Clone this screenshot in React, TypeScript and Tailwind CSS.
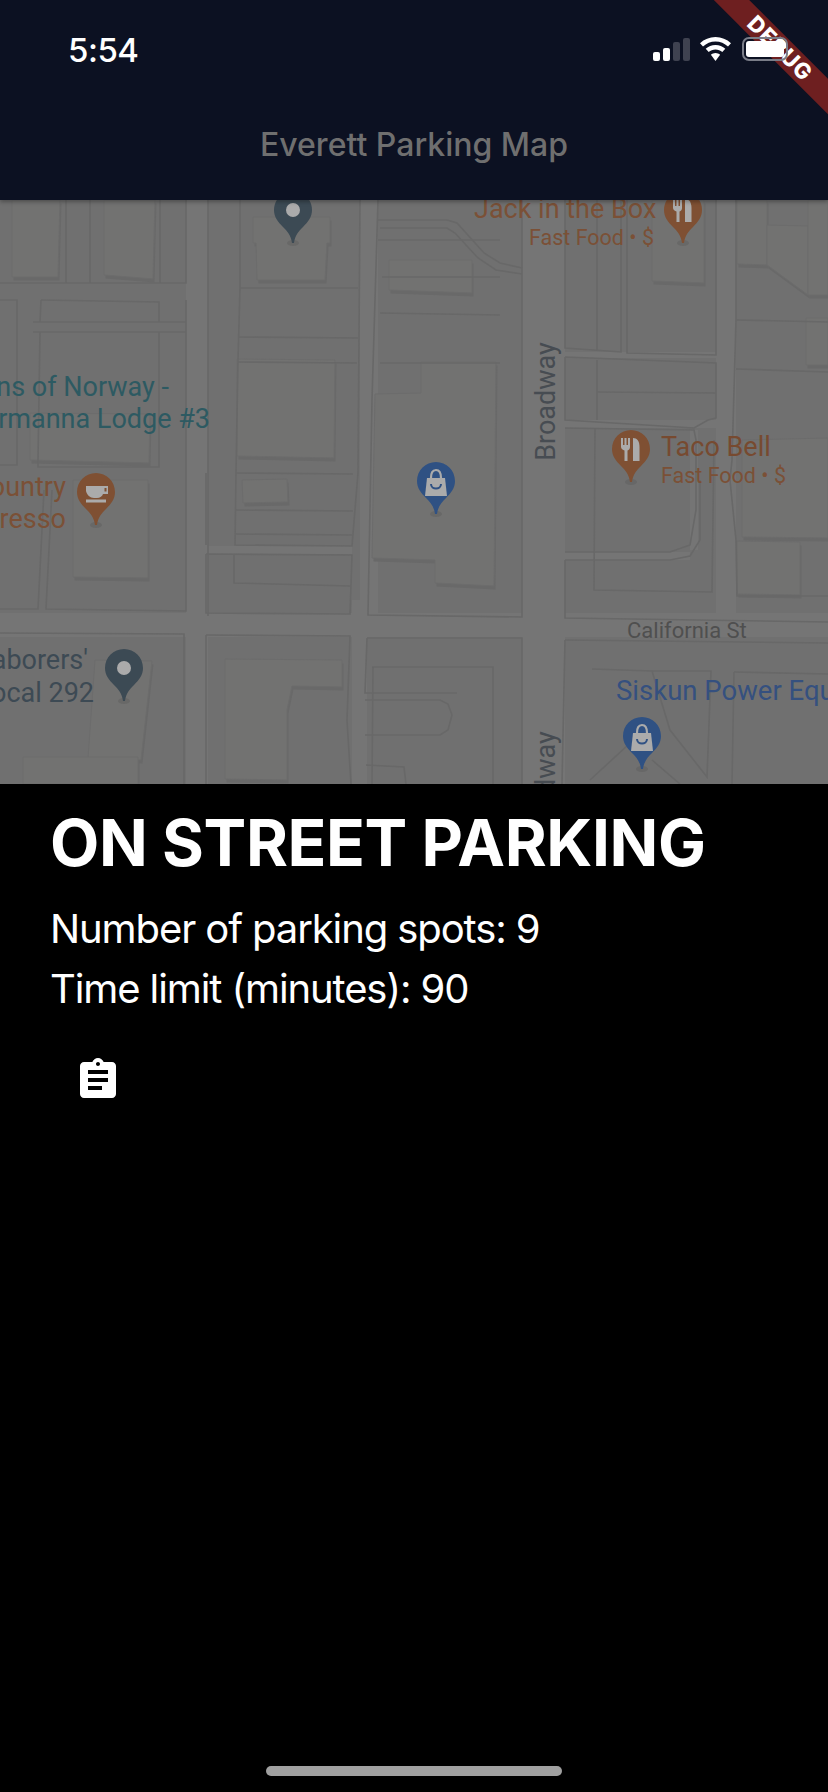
import { MdAssignment } from "react-icons/md";

const blockLines = [
  // left column
  "0,283 186,283 186,200",
  "66,200 66,283",
  "90,200 90,283",
  "160,200 160,283",
  "0,300 17,300 17,465 0,465",
  "41,300 159,302 159,322",
  "41,300 40,322",
  "33,322 186,322",
  "33,332 186,332",
  "40,332 38,460 38,467 159,467 159,332",
  "186,300 186,611 46,609 52,490 ",
  "0,609 38,609 44,490",
  "208,200 208,616",
  "0,633 184,634 184,784",
  "206,635 350,636 347,720 351,784",
  "206,635 206,784",
  // middle column
  "240,200 240,288 238,360 236,473 235,545 352,546 358,473 360,200",
  "240,288 358,288",
  "238,337 358,338",
  "238,362 357,363",
  "236,473 353,474",
  "235,510 353,511",
  "235,534 352,535",
  "206,554 352,555 350,614 206,613 206,554",
  "234,555 234,583 350,586",
  "206,473 206,545",
  // right-middle column
  "378,200 372,400 368,615 522,617 522,200",
  "378,220 447,220 457,223 484,253 500,263 522,268",
  "380,228 447,228 455,233 478,258 496,270 522,274",
  "378,240 500,240",
  "382,277 500,277",
  "380,313 500,315",
  "380,363 500,363",
  "367,638 522,638 522,784",
  "367,638 365,693 457,693",
  "365,700 440,700 448,704 452,715 448,730 440,735 365,735",
  "372,667 493,667 493,784",
  "366,765 404,767 406,784",
  "373,667 372,784",
  // right of Broadway
  "565,200 565,348 621,352 621,200",
  "597,200 597,350",
  "627,200 627,353 716,355 716,200",
  "565,357 716,363 716,418 708,420 694,428 565,420 565,357",
  "597,360 597,420",
  "597,392 716,393",
  "565,428 694,430 696,440 696,510 690,545 670,552 565,552",
  "565,560 670,560 690,556 700,540 700,480",
  "565,560 565,618 828,622",
  "565,640 828,643",
  "595,428 594,590 712,592 714,440",
  "736,200 736,320 732,460 730,480 736,540 737,596 828,596",
  "736,320 828,322",
  "736,369 828,372",
  "565,640 562,784",
  "592,669 652,671 670,730 707,777 711,671 652,671",
  "734,672 732,784",
  "734,672 828,674",
  "590,780 628,745 638,745",
  "652,760 680,784",
];

const buildings = [
  "12,200 60,200 58,277 12,277",
  "104,200 155,200 153,279 104,275",
  "253,217 330,217 330,243 327,243 325,280 257,280 256,243 253,243",
  "237,359 335,360 334,458 237,456",
  "242,480 287,479 288,502 243,503",
  "30,413 150,414 149,463 30,460",
  "73,480 148,480 148,578 73,577",
  "95,660 152,661 141,760 88,758",
  "23,757 138,757 138,784 23,784",
  "225,659 342,660 342,687 292,686 287,710 287,780 225,779",
  "389,260 472,260 472,293 389,290",
  "421,362 496,362 494,586 435,583 435,560 372,558 375,394 421,393",
  "652,200 704,200 704,283 652,281",
  "737,200 767,200 767,265 737,264",
  "767,225 808,226 808,295 767,265",
  "808,200 828,200 828,295 808,295",
  "742,440 828,438 828,538 742,537",
  "737,541 800,542 800,595 737,594",
  "806,318 828,318 828,365 806,365",
];

function MapBackground() {
  return (
    <svg className="absolute inset-0 h-full w-full" viewBox="0 200 828 584" fill="none">
      <rect x="0" y="200" width="828" height="584" fill="#707070" />
      {/* roads */}
      <g fill="#757575">
        <rect x="186" y="200" width="22" height="584" />
        <rect x="360" y="200" width="18" height="430" />
        <rect x="352" y="600" width="15" height="184" />
        <rect x="522" y="200" width="43" height="584" />
        <rect x="716" y="200" width="20" height="420" />
        <rect x="0" y="613" width="828" height="24" />
        <rect x="208" y="546" width="144" height="8" />
        <rect x="565" y="352" width="151" height="6" />
        <rect x="565" y="420" width="171" height="8" />
        <rect x="565" y="552" width="125" height="8" />
        <rect x="690" y="430" width="8" height="120" />
      </g>
      {buildings.map((points) => (
        <polygon key={`s${points}`} points={points} fill="#696969" transform="translate(1.5,3.5)" />
      ))}
      {buildings.map((points) => (
        <polygon key={points} points={points} fill="#727271" stroke="#6c6c6c" strokeWidth="1" />
      ))}
      {blockLines.map((points) => (
        <polyline key={points} points={points} stroke="#686868" strokeWidth="1.6" />
      ))}
    </svg>
  );
}

const pinShape =
  "M19 0C29.5 0 38 8.5 38 19C38 26 34 31 29 36C25 40 21 44 20 52H18C17 44 13 40 9 36C4 31 0 26 0 19C0 8.5 8.5 0 19 0Z";

function Pin({ color, kind, className }: { color: string; kind: "dot" | "food" | "cup" | "bag"; className: string }) {
  const glyph = "#ababab";
  return (
    <svg className={`absolute h-[56px] w-[38px] ${className}`} viewBox="0 0 38 56">
      <ellipse cx="19" cy="52" rx="6" ry="3" fill="#555555" opacity="0.35" />
      <path d={pinShape} fill={color} />
      {kind === "dot" && <circle cx="19" cy="19" r="7" fill={glyph} />}
      {kind === "food" && (
        <g fill={glyph}>
          <path d="M9 8h2v7h1.500V8h2v7H16V8h2v9c0 2-1 3-2.500 3.400V31h-3V20.400C11 20 9 19 9 17Z" />
          <path d="M21 31V8c4 0 6.500 3 6.500 9v14Z" />
        </g>
      )}
      {kind === "cup" && (
        <g fill={glyph}>
          <path d="M9 13h22v8h-5c-.5 2-3 4-6 4h-3c-4 0-7-3-8-7Z" />
          <rect x="27.500" y="15" width="2" height="3.500" fill={color} />
          <rect x="9" y="26.500" width="20" height="3" />
        </g>
      )}
      {kind === "bag" && (
        <g>
          <path d="M14 16c0-5 1.500-8 5-8s5 3 5 8" fill="none" stroke={glyph} strokeWidth="2.200" />
          <path d="M10 16h18l2 18H8Z" fill={glyph} />
          <path d="M14 22c0 6 10 6 10 0" fill="none" stroke={color} strokeWidth="2" />
        </g>
      )}
    </svg>
  );
}

const labels = [
  { text: "Jack in the Box", cls: "left-[474px] top-[-4px] text-[27px] text-[#7b5036]" },
  { text: "Fast Food • $", cls: "left-[529px] top-[27px] text-[21.500px] text-[#7b5036]" },
  { text: "Sons of Norway -", cls: "right-[659px] top-[174px] text-[27px] text-[#2d5a62]" },
  { text: "Normanna Lodge #3", cls: "right-[618px] top-[206px] text-[27px] text-[#2d5a62]" },
  { text: "Country", cls: "right-[762px] top-[274px] text-[27px] text-[#7b5036]" },
  { text: "Espresso", cls: "right-[762px] top-[306px] text-[27px] text-[#7b5036]" },
  { text: "Taco Bell", cls: "left-[661px] top-[234px] text-[27px] text-[#774a30]" },
  { text: "Fast Food • $", cls: "left-[661px] top-[265px] text-[21.500px] text-[#7b5036]" },
  { text: "California St", cls: "left-[627px] top-[420px] text-[22px] text-[#4f4f4f]" },
  { text: "Laborers'", cls: "right-[740px] top-[447px] text-[27px] text-[#3d4a54]" },
  { text: "Local 292", cls: "right-[734px] top-[480px] text-[27px] text-[#3d4a54]" },
  { text: "Siskun Power Equipment", cls: "left-[616px] top-[477px] text-[27.500px] text-[#35507f]" },
  { text: "Broadway", cls: "left-[487px] top-[188px] -rotate-90 text-[27px] text-[#474c52]" },
  { text: "Broadway", cls: "left-[487px] top-[577px] -rotate-90 text-[27px] text-[#474c52]" },
];

function StatusIcons() {
  return (
    <div className="mt-[8px] flex h-[24px] items-end">
      <div className="flex items-end gap-[3px]">
        <div className="h-[9px] w-[7px] rounded-[2px] bg-white" />
        <div className="h-[13px] w-[7px] rounded-[2px] bg-white" />
        <div className="h-[19px] w-[7px] rounded-[2px] bg-[#3f4250]" />
        <div className="h-[23px] w-[7px] rounded-[2px] bg-[#3f4250]" />
      </div>
      <svg className="ml-[10px] h-[24px] w-[31px]" viewBox="0 0 31 24" fill="white">
        <path d="M15.500 0C9.500 0 4.200 2.300 0 6.200L3 9.500C6.400 6.400 10.700 4.500 15.500 4.500S24.600 6.400 28 9.500L31 6.200C26.800 2.300 21.500 0 15.500 0Z" />
        <path d="M15.500 8C11.700 8 8.300 9.400 5.700 11.800L8.700 15C10.500 13.400 12.900 12.400 15.500 12.400S20.500 13.400 22.300 15L25.300 11.800C22.700 9.400 19.300 8 15.500 8Z" />
        <path d="M15.500 16C13.700 16 12.100 16.700 10.900 17.800L15.500 24L20.100 17.800C18.900 16.700 17.300 16 15.500 16Z" />
      </svg>
      <div className="ml-[11px] flex h-[24px] w-[46px] items-center rounded-[7px] border-2 border-[#7a7d88] p-[2px]">
        <div className="h-full w-[38px] rounded-[3px] bg-white" />
      </div>
    </div>
  );
}

export default function App() {
  return (
    <div className="relative flex h-[1792px] w-[828px] flex-col overflow-hidden bg-black font-['Inter',sans-serif] text-white">
      <header className="relative z-10 h-[200px] shrink-0 overflow-hidden bg-[#0c1122] pt-[30px] shadow-[0_2px_4px_rgba(0,0,0,0.3)]">
        <div className="absolute left-[645px] top-[31px] flex h-[25px] w-[260px] rotate-45 items-center justify-center bg-[#6e1f20] pl-[14px] text-[22px] font-extrabold tracking-[1px] text-white">
          DEBUG
        </div>
        <div className="relative flex items-start justify-between pl-[68px] pr-[40px]">
          <span className="text-[33px] font-medium leading-[40px] tracking-[-0.5px]">5:54</span>
          <div className="mt-[-1px]">
            <StatusIcons />
          </div>
        </div>
        <div className="relative pt-[53px] text-center text-[32px] font-medium leading-[44px] text-[#6f6f6f]">
          Everett Parking Map
        </div>
      </header>

      <div className="relative h-[584px] shrink-0 overflow-hidden font-['Roboto',sans-serif]">
        <MapBackground />
        {labels.map((label, i) => (
          <span key={i} className={`absolute whitespace-nowrap leading-none ${label.cls}`}>
            {label.text}
          </span>
        ))}
        <Pin color="#3c4a54" kind="dot" className="left-[274px] top-[-9px]" />
        <Pin color="#7f5033" kind="food" className="left-[664px] top-[-9px]" />
        <Pin color="#7f5033" kind="food" className="left-[612px] top-[230px]" />
        <Pin color="#7f5033" kind="cup" className="left-[77px] top-[273px]" />
        <Pin color="#2f5183" kind="bag" className="left-[417px] top-[262px]" />
        <Pin color="#3c4a54" kind="dot" className="left-[105px] top-[449px]" />
        <Pin color="#2f5183" kind="bag" className="left-[623px] top-[517px]" />
      </div>

      <main className="pl-[50px] pt-[23px]">
        <h1 className="text-[64px] font-bold leading-[72px] tracking-[-0.4px]">ON STREET PARKING</h1>
        <div className="mt-[20px] text-[40px] leading-[60px] tracking-[-1.1px]">
          <p>Number of parking spots: 9</p>
          <p>Time limit (minutes): 90</p>
        </div>
        <MdAssignment className="ml-[24px] mt-[37px] text-[48px] text-white" />
      </main>

      <div className="absolute bottom-[16px] left-[266px] h-[10px] w-[296px] rounded-full bg-[#a0a0a0]" />
    </div>
  );
}
